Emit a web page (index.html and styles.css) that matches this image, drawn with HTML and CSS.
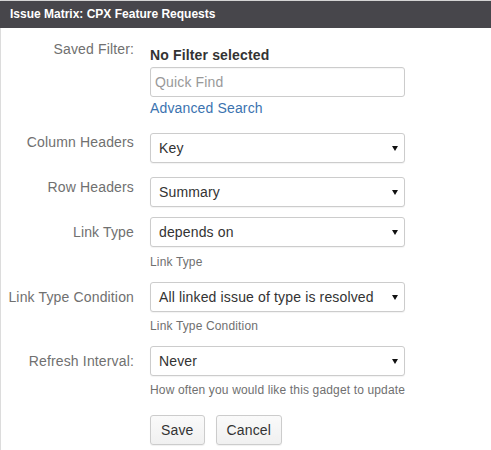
FILE: index.html
```html
<!DOCTYPE html>
<html>
<head>
<meta charset="utf-8">
<link rel="stylesheet" href="styles.css">
</head>
<body>
<div class="gadget">
  <div class="header">Issue Matrix: CPX Feature Requests</div>
  <form class="form">
    <div class="row">
      <div class="label">Saved Filter:</div>
      <div class="field">
        <div class="filter-name">No Filter selected</div>
        <div class="input placeholder">Quick Find</div>
        <a class="link" href="#">Advanced Search</a>
      </div>
    </div>
    <div class="row row-col">
      <div class="label">Column Headers</div>
      <div class="field">
        <div class="select">Key</div>
      </div>
    </div>
    <div class="row row-rowh">
      <div class="label label-rowh">Row Headers</div>
      <div class="field">
        <div class="select">Summary</div>
      </div>
    </div>
    <div class="row row-link">
      <div class="label label-mid">Link Type</div>
      <div class="field">
        <div class="select">depends on</div>
        <div class="desc">Link Type</div>
      </div>
    </div>
    <div class="row row-cond">
      <div class="label label-mid">Link Type Condition</div>
      <div class="field">
        <div class="select">All linked issue of type is resolved</div>
        <div class="desc">Link Type Condition</div>
      </div>
    </div>
    <div class="row row-cond">
      <div class="label label-mid">Refresh Interval:</div>
      <div class="field">
        <div class="select">Never</div>
        <div class="desc">How often you would like this gadget to update</div>
      </div>
    </div>
    <div class="row row-buttons">
      <div class="label"></div>
      <div class="field buttons">
        <button type="button" class="btn">Save</button>
        <button type="button" class="btn">Cancel</button>
      </div>
    </div>
  </form>
</div>
</body>
</html>
```
FILE: styles.css
```css
html, body {
  margin: 0;
  padding: 0;
  background: #fff;
}
body {
  font-family: "Liberation Sans", Arial, sans-serif;
  font-size: 14px;
  letter-spacing: 0.15px;
  color: #333;
  width: 491px;
  height: 450px;
  overflow: hidden;
}
.gadget {
  border-top: 1px solid #d4d4d4;
  border-left: 1px solid #dcdcdc;
  height: 449px;
}
.header {
  height: 27px;
  line-height: 27px;
  background: #47464b;
  color: #fff;
  font-weight: bold;
  font-size: 12px;
  letter-spacing: 0;
  padding-left: 10px;
  margin-left: -1px;
}
.form {
  padding-top: 12px;
}
.row {
  display: grid;
  grid-template-columns: 133px 255px;
  column-gap: 16px;
  align-items: start;
}
.label {
  text-align: right;
  color: #707070;
  line-height: 18px;
  white-space: nowrap;
}
.label-rowh {
  padding-top: 1px;
}
.label-mid {
  padding-top: 6px;
}
.field {
  display: flex;
  flex-direction: column;
  align-items: flex-start;
}
.filter-name {
  font-weight: bold;
  line-height: 18px;
  margin-top: 6px;
  color: #333;
}
.input {
  box-sizing: border-box;
  width: 255px;
  height: 30px;
  margin-top: 3px;
  border: 1px solid #ccc;
  border-radius: 3px;
  padding: 0 4px;
  line-height: 28px;
  box-shadow: inset 0 1px 1px rgba(0,0,0,0.04);
}
.placeholder {
  color: #999;
}
.link {
  color: #3b73af;
  text-decoration: none;
  line-height: 18px;
  margin-top: 2px;
}
.row-col {
  margin-top: 16px;
}
.row-rowh {
  margin-top: 14px;
}
.row-link {
  margin-top: 10px;
}
.row-cond {
  margin-top: 12px;
}
.select {
  position: relative;
  box-sizing: border-box;
  width: 255px;
  height: 30px;
  border: 1px solid #ccc;
  border-radius: 3px;
  padding: 0 20px 0 8px;
  line-height: 28px;
  color: #333;
  background: #fff;
  white-space: nowrap;
  box-shadow: 0 1px 1px rgba(0,0,0,0.05);
}
.select::after {
  content: "";
  position: absolute;
  right: 6px;
  top: 12px;
  border-left: 3px solid transparent;
  border-right: 3px solid transparent;
  border-top: 5px solid #111;
}
.desc {
  font-size: 12px;
  color: #707070;
  line-height: 16px;
  margin-top: 7px;
  white-space: nowrap;
}
.row-cond .desc {
  margin-top: 6px;
}
.row-buttons {
  margin-top: 17px;
}
.buttons {
  flex-direction: row;
  gap: 11px;
}
.btn {
  font-family: "Liberation Sans", Arial, sans-serif;
  font-size: 14px;
  letter-spacing: 0.15px;
  color: #333;
  height: 30px;
  padding: 0 10px;
  border: 1px solid #ccc;
  border-radius: 3px;
  background: linear-gradient(#fafafa, #f0f0f0);
  box-shadow: 0 1px 1px rgba(0,0,0,0.06);
}
```
